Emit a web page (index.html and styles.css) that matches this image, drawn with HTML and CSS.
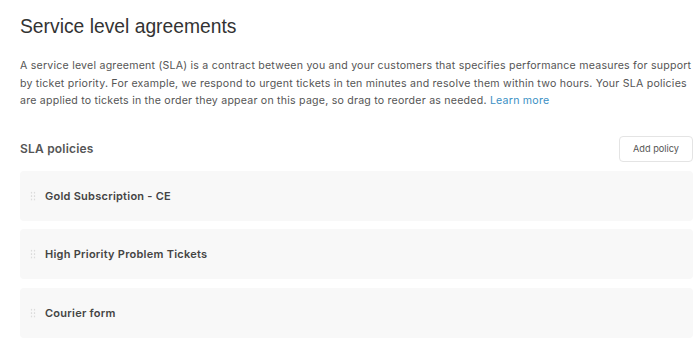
FILE: index.html
```html
<!DOCTYPE html>
<html lang="en">
<head>
    <meta charset="UTF-8">
    <meta name="viewport" content="width=device-width, initial-scale=1.0">
    <title>Service level agreements</title>
    <link rel="stylesheet" href="styles.css">
</head>
<body>

    <div class="page">
        <h1 class="title">Service level agreements</h1>
        <p class="intro">
            A service level agreement (SLA) is a contract between you and your customers that specifies performance measures for support<br>
            by ticket priority. For example, we respond to urgent tickets in ten minutes and resolve them within two hours. Your SLA policies<br>
            are applied to tickets in the order they appear on this page, so drag to reorder as needed. <a href="#">Learn more</a>
        </p>

        <!-- Policies -->
        <div class="section-head">
            <h2>SLA policies</h2>
            <button class="btn">Add policy</button>
        </div>

        <div class="policies">
            <div class="policy">
                <span class="handle"></span>
                <span class="name">Gold Subscription - CE</span>
            </div>
            <div class="policy">
                <span class="handle"></span>
                <span class="name">High Priority Problem Tickets</span>
            </div>
            <div class="policy">
                <span class="handle"></span>
                <span class="name">Courier form</span>
            </div>
        </div>
    </div>

</body>
</html>
```

FILE: styles.css
```css
body {
    font-family: Inter, "Liberation Sans", sans-serif;
    background: #fff;
    color: #333;
    margin: 0;
}

.page {
    padding: 12px 6px 0 20px;
}

.title {
    font-family: "Liberation Sans", Arial, sans-serif;
    font-size: 19.3px;
    font-weight: normal;
    color: #333;
    margin: 0 0 15px;
    line-height: 30px;
}

.intro {
    font-size: 10.6px;
    letter-spacing: 0.22px;
    line-height: 17.5px;
    color: #555;
    white-space: nowrap;
    margin: 0 0 26px;
}

.intro a {
    color: #3a8fc4;
    text-decoration: none;
}

/* Policies */
.section-head {
    display: flex;
    justify-content: space-between;
    align-items: center;
    margin-bottom: 9px;
}

.section-head h2 {
    font-size: 12px;
    font-weight: 600;
    letter-spacing: 0.2px;
    color: #555;
    margin: 0;
}

.btn {
    font-family: inherit;
    font-size: 9.2px;
    color: #555;
    background: #fff;
    border: 1px solid #e4e4e4;
    border-radius: 4px;
    width: 74px;
    height: 26px;
    padding: 0;
}

.policies {
    display: flex;
    flex-direction: column;
    gap: 8.5px;
}

.policy {
    display: flex;
    align-items: center;
    height: 50px;
    background: #f8f8f8;
    border-radius: 4px;
    padding-left: 10px;
}

.handle {
    width: 6px;
    height: 10px;
    margin-right: 9px;
    background-image: radial-gradient(circle, #dcdcdc 0.9px, transparent 1.1px);
    background-size: 3px 3.4px;
}

.name {
    font-size: 11px;
    font-weight: 600;
    letter-spacing: 0.25px;
    color: #444;
}
```
